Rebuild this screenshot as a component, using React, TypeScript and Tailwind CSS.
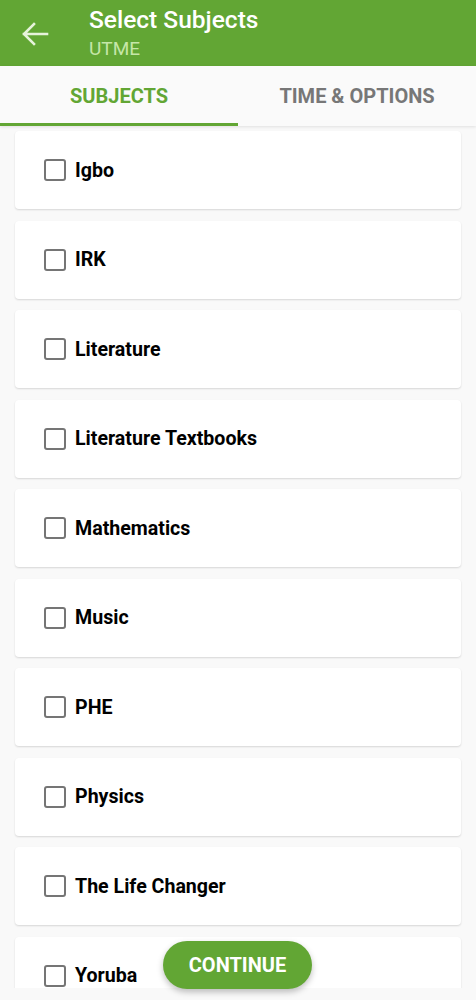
import React, { useState } from 'react';

const SUBJECTS = [
  'Igbo',
  'IRK',
  'Literature',
  'Literature Textbooks',
  'Mathematics',
  'Music',
  'PHE',
  'Physics',
  'The Life Changer',
  'Yoruba',
];

const BackArrow: React.FC = () => (
  <svg width="28" height="24" viewBox="0 0 28 24" fill="none">
    <path d="M26 12H3M13 2L3 12l10 10" stroke="#e6f3db" strokeWidth="2.6" strokeLinecap="square" />
  </svg>
);

const App: React.FC = () => {
  const [tab, setTab] = useState(0);
  const [checked, setChecked] = useState<Record<string, boolean>>({});

  const toggle = (name: string) => setChecked((c) => ({ ...c, [name]: !c[name] }));

  return (
    <div
      className="relative w-full h-[1000px] flex flex-col overflow-hidden bg-[#f9f9f9]"
      style={{ fontFamily: 'Roboto, "Liberation Sans", sans-serif' }}
    >
      {/* App bar */}
      <div className="h-[66px] shrink-0 bg-[#62a634] flex items-center">
        <button className="w-[89px] h-full flex items-center pl-[21px] pt-[2px]">
          <BackArrow />
        </button>
        <div className="flex flex-col">
          <span className="text-[24.5px] leading-[28px] font-medium text-white">Select Subjects</span>
          <span className="text-[19px] leading-[22px] text-[#c6e6a8] mt-[4px]">UTME</span>
        </div>
      </div>

      {/* Tabs */}
      <div className="h-[60px] shrink-0 flex bg-[#fafafa] shadow-[0_1px_3px_rgba(0,0,0,0.1)] z-10">
        {['SUBJECTS', 'TIME & OPTIONS'].map((t, i) => (
          <button
            key={t}
            onClick={() => setTab(i)}
            className={
              tab === i
                ? 'flex-1 flex items-center justify-center text-[20px] font-bold text-[#62a634] border-b-[3px] border-[#62a634] pt-[3px]'
                : 'flex-1 flex items-center justify-center text-[20px] font-bold text-[#777777] border-b-[3px] border-transparent pt-[3px]'
            }
          >
            {t}
          </button>
        ))}
      </div>

      {/* Subject list */}
      <div className="flex-1 overflow-hidden px-[15px] pt-[5px] flex flex-col gap-[11.5px]">
        {SUBJECTS.map((s) => (
          <label
            key={s}
            className="h-[78px] shrink-0 bg-white rounded-[4px] shadow-[0_1px_2px_rgba(0,0,0,0.14)] flex items-center pl-[29px] gap-[9px] cursor-pointer"
          >
            <input type="checkbox" className="hidden" checked={!!checked[s]} onChange={() => toggle(s)} />
            <span
              className={
                checked[s]
                  ? 'w-[22px] h-[22px] rounded-[3px] border-2 border-[#62a634] bg-[#62a634]'
                  : 'w-[22px] h-[22px] rounded-[3px] border-2 border-[#757575] bg-white'
              }
            />
            <span className="text-[19.6px] font-bold text-black pt-[1px]">{s}</span>
          </label>
        ))}
      </div>
      <div className="h-[12px] shrink-0 bg-[#f9f9f9]" />

      {/* Floating continue button */}
      <button className="absolute left-[163px] bottom-[11px] w-[149px] h-[48px] rounded-full bg-[#62a634] text-white text-[20px] font-bold shadow-[0_3px_6px_rgba(0,0,0,0.25)]">
        CONTINUE
      </button>
    </div>
  );
};

export default App;
